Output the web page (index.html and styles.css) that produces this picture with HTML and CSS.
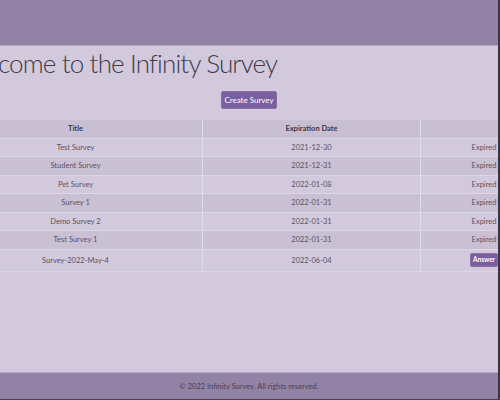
FILE: index.html
```html
<!DOCTYPE html>
<html lang="en">
<head>
<meta charset="utf-8">
<title>Infinity Survey</title>
<link rel="stylesheet" href="styles.css">
</head>
<body>
<div class="frame">
  <header class="topbar"></header>
  <main class="main">
    <div class="container">
      <h1 class="welcome">Welcome to the Infinity Survey</h1>
      <div class="actions"><button class="btn create">Create Survey</button></div>
      <table class="surveys">
        <thead>
          <tr><th class="c-title">Title</th><th class="c-date">Expiration Date</th><th class="c-status"></th></tr>
        </thead>
        <tbody>
          <tr><td>Test Survey</td><td>2021-12-30</td><td class="status">Expired</td></tr>
          <tr><td>Student Survey</td><td>2021-12-31</td><td class="status">Expired</td></tr>
          <tr><td>Pet Survey</td><td>2022-01-08</td><td class="status">Expired</td></tr>
          <tr><td>Survey 1</td><td>2022-01-31</td><td class="status">Expired</td></tr>
          <tr><td>Demo Survey 2</td><td>2022-01-31</td><td class="status">Expired</td></tr>
          <tr><td>Test Survey 1</td><td>2022-01-31</td><td class="status">Expired</td></tr>
          <tr class="last"><td>Survey-2022-May-4</td><td>2022-06-04</td><td class="status"><button class="btn answer">Answer</button></td></tr>
        </tbody>
      </table>
    </div>
  </main>
  <footer class="footer">© 2022 Infinity Survey. All rights reserved.</footer>
</div>
</body>
</html>
```

FILE: styles.css
```css
html, body {
  margin: 0;
  padding: 0;
  overflow: hidden;
}
body {
  font-family: Lato, "Open Sans", sans-serif;
  background: #d3c9dd;
  color: #4a4352;
}
.frame {
  box-sizing: border-box;
  width: 500px;
  height: 400px;
  display: flex;
  flex-direction: column;
  border-right: 2px solid #3b3440;
  border-bottom: 1px solid #4a4352;
  overflow: hidden;
}
.topbar {
  height: 45px;
  flex-shrink: 0;
  background: #9282a5;
  border-bottom: 1px solid #b7a9c6;
}
.main {
  flex: 1;
  display: flex;
  justify-content: center;
}
.container {
  width: 600px;
  flex-shrink: 0;
}
.welcome {
  margin: 0 0 3px 7px;
  font-family: Lato, "Open Sans", sans-serif;
  font-size: 26px;
  line-height: 35px;
  font-weight: 300;
  color: #403a47;
  letter-spacing: -0.85px;
}
.actions {
  display: flex;
  justify-content: center;
  margin-top: 10px;
}
.btn {
  font-family: Lato, "Open Sans", sans-serif;
  background: #7b5ea0;
  color: #fff;
  border: 1px solid #8a70ab;
  border-radius: 2px;
  cursor: pointer;
}
.create {
  width: 56px;
  height: 18px;
  padding: 0;
  font-size: 8px;
  font-weight: 400;
  line-height: 16px;
}
.surveys {
  margin-top: 11px;
  width: 600px;
  border-collapse: collapse;
  font-size: 7.5px;
  color: #5a5263;
  table-layout: fixed;
}
.surveys th, .surveys td {
  text-align: center;
  height: 17.5px;
  padding: 0;
  border-bottom: 1px solid #ddd6e5;
}
.surveys th {
  background: #c8bfd3;
  font-weight: 700;
  color: #3e3745;
}
.c-title { width: 253px; }
.c-date { width: 217px; }
.c-status { width: 130px; }
.surveys th + th, .surveys td + td {
  border-left: 1px solid #e2dbe9;
}
.surveys td.status {
  padding-right: 4px;
}
.surveys tbody tr:nth-child(even) td {
  background: #c9c0d4;
}
.surveys tr.last td {
  height: 21px;
}
.answer {
  width: 28px;
  height: 14px;
  padding: 0;
  font-size: 6.5px;
  font-weight: 700;
  line-height: 12px;
}
.footer {
  height: 26px;
  flex-shrink: 0;
  background: #9282a5;
  border-top: 1px solid #b7a9c6;
  color: #4a4055;
  font-size: 7.5px;
  display: flex;
  align-items: center;
  justify-content: center;
}
```
